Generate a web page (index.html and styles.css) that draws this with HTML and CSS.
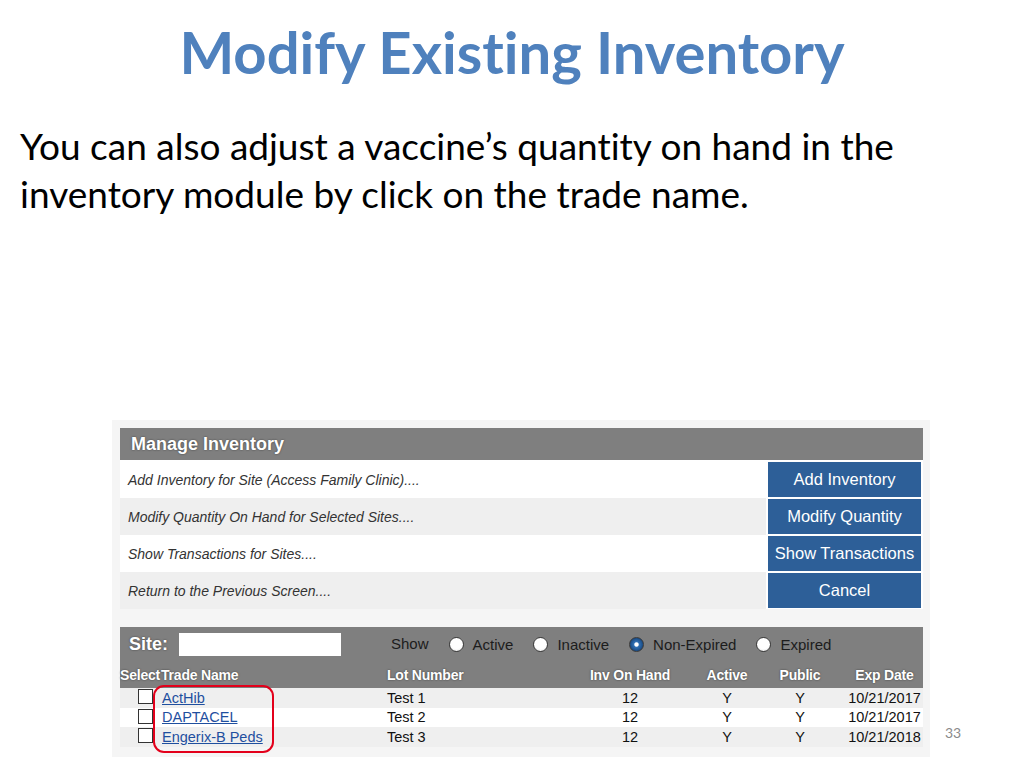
FILE: index.html
```html
<!DOCTYPE html>
<html>
<head>
<meta charset="utf-8">
<link rel="stylesheet" href="styles.css">
</head>
<body>
<div class="slide">
  <h1 class="title">Modify Existing Inventory</h1>
  <p class="lead">You can also adjust a vaccine’s quantity on hand in the inventory module by click on the trade name.</p>

  <div class="shot">
    <div class="panel">
      <div class="mi-head">Manage Inventory</div>
      <div class="mi-row">
        <div class="mi-text">Add Inventory for Site (Access Family Clinic)....</div>
        <div class="mi-btn">Add Inventory</div>
      </div>
      <div class="mi-row alt">
        <div class="mi-text">Modify Quantity On Hand for Selected Sites....</div>
        <div class="mi-btn">Modify Quantity</div>
      </div>
      <div class="mi-row">
        <div class="mi-text">Show Transactions for Sites....</div>
        <div class="mi-btn">Show Transactions</div>
      </div>
      <div class="mi-row alt">
        <div class="mi-text">Return to the Previous Screen....</div>
        <div class="mi-btn">Cancel</div>
      </div>
    </div>

    <div class="panel inv">
      <div class="inv-top">
        <div class="site-label">Site:</div>
        <div class="site-input"></div>
        <div class="show">Show</div>
        <div class="opt"><span class="radio"></span><span>Active</span></div>
        <div class="opt"><span class="radio"></span><span>Inactive</span></div>
        <div class="opt"><span class="radio on"></span><span>Non-Expired</span></div>
        <div class="opt"><span class="radio"></span><span>Expired</span></div>
      </div>
      <div class="grid head">
        <div class="c-sel">Select</div>
        <div>Trade Name</div>
        <div>Lot Number</div>
        <div class="ctr">Inv On Hand</div>
        <div class="ctr">Active</div>
        <div class="ctr">Public</div>
        <div class="ctr">Exp Date</div>
      </div>
      <div class="grid data alt">
        <div class="c-sel"><span class="chk"></span></div>
        <div><a class="lnk">ActHib</a></div>
        <div>Test 1</div>
        <div class="ctr">12</div>
        <div class="ctr">Y</div>
        <div class="ctr">Y</div>
        <div class="ctr">10/21/2017</div>
      </div>
      <div class="grid data">
        <div class="c-sel"><span class="chk"></span></div>
        <div><a class="lnk">DAPTACEL</a></div>
        <div>Test 2</div>
        <div class="ctr">12</div>
        <div class="ctr">Y</div>
        <div class="ctr">Y</div>
        <div class="ctr">10/21/2017</div>
      </div>
      <div class="grid data alt">
        <div class="c-sel"><span class="chk"></span></div>
        <div><a class="lnk">Engerix-B Peds</a></div>
        <div>Test 3</div>
        <div class="ctr">12</div>
        <div class="ctr">Y</div>
        <div class="ctr">Y</div>
        <div class="ctr">10/21/2018</div>
      </div>
    </div>

    <div class="highlight"></div>
  </div>

  <div class="page-num">33</div>
</div>
</body>
</html>
```

FILE: styles.css
```css
html, body {
  margin: 0;
  padding: 0;
  background: #ffffff;
}

.slide {
  position: relative;
  width: 1024px;
  height: 768px;
  overflow: hidden;
  font-family: Lato, "Open Sans", sans-serif;
  font-variant-ligatures: none;
}

.title {
  margin: 0;
  padding-top: 16px;
  height: 72px;
  line-height: 72px;
  font-size: 58px;
  font-weight: 700;
  color: #4f81bd;
  text-align: center;
}

.lead {
  margin: 34px 0 0 0;
  padding-left: 20px;
  width: 900px;
  font-size: 37px;
  line-height: 48px;
  color: #000;
}

.shot {
  position: relative;
  margin: 202px 0 0 112px;
  width: 803px;
  padding: 8px 7px 10px 8px;
  background: #f5f5f5;
  font-family: "Liberation Sans", Arial, sans-serif;
}

.panel {
  background: #ffffff;
}

.mi-head {
  height: 32px;
  display: flex;
  align-items: center;
  padding-left: 11px;
  background: #7f7f7f;
  color: #fff;
  font-weight: 700;
  font-size: 18px;
  text-shadow: 0 0 2px #3a3a3a;
  margin-bottom: 1px;
}

.mi-row {
  display: grid;
  grid-template-columns: 1fr 153px;
  column-gap: 2px;
  padding-right: 2px;
  height: 37px;
  background: #ffffff;
}

.mi-row.alt .mi-text {
  background: #efefef;
}

.mi-text {
  display: flex;
  align-items: center;
  padding-left: 8px;
  font-style: italic;
  font-size: 14px;
  color: #333;
}

.mi-btn {
  margin: 1px 0;
  display: flex;
  align-items: center;
  justify-content: center;
  background: #2d5f98;
  color: #fff;
  font-size: 16.5px;
  white-space: nowrap;
}

.inv {
  margin-top: 18px;
}

.inv-top {
  height: 35px;
  display: flex;
  align-items: center;
  background: #7f7f7f;
  font-size: 15px;
  color: #1c1c1c;
}

.site-label {
  padding-left: 9px;
  width: 50px;
  color: #fff;
  font-weight: 700;
  font-size: 18px;
  text-shadow: 0 0 2px #3a3a3a;
}

.site-input {
  width: 162px;
  height: 23px;
  background: #fff;
}

.show {
  margin-left: 50px;
  margin-top: -3px;
}

.opt {
  display: flex;
  align-items: center;
  gap: 9px;
  margin-left: 20px;
}

.radio {
  width: 13px;
  height: 13px;
  border-radius: 50%;
  background: radial-gradient(circle at 50% 40%, #ffffff 55%, #dcdcdc 100%);
  border: 1px solid #3a3a3a;
  box-sizing: content-box;
}

.radio.on {
  background: radial-gradient(circle, #ffffff 0 18%, #2f6fb3 30%, #16467f 75%, #0f3463 100%);
}

.grid {
  display: grid;
  grid-template-columns: 41px 226px 173px 140px 54px 92px 77px;
  align-items: center;
}

.grid.head {
  height: 26px;
  background: #7f7f7f;
  color: #fff;
  font-weight: 700;
  font-size: 14px;
  text-shadow: 0 0 2px #3a3a3a;
  letter-spacing: -0.2px;
  white-space: nowrap;
}

.grid.data {
  height: 19.5px;
  background: #fff;
  font-size: 14.5px;
  color: #111;
}

.grid.data.alt {
  background: #efefef;
}

.ctr {
  text-align: center;
}

.c-sel {
  white-space: nowrap;
}

.grid.data .c-sel {
  display: flex;
  align-items: flex-start;
  height: 100%;
  padding-left: 18px;
}

.chk {
  display: block;
  width: 13px;
  height: 13px;
  margin-top: 1px;
  border: 1px solid #333;
  background: #fff;
}

.lnk {
  color: #1f4f9f;
  text-decoration: underline;
  padding-left: 1px;
}

.highlight {
  position: absolute;
  left: 41px;
  top: 265px;
  width: 117px;
  height: 64px;
  border: 2.5px solid #e3001b;
  border-radius: 11px;
}

.page-num {
  position: absolute;
  left: 945px;
  top: 724px;
  font-size: 14px;
  color: #8a8a8a;
}
```
